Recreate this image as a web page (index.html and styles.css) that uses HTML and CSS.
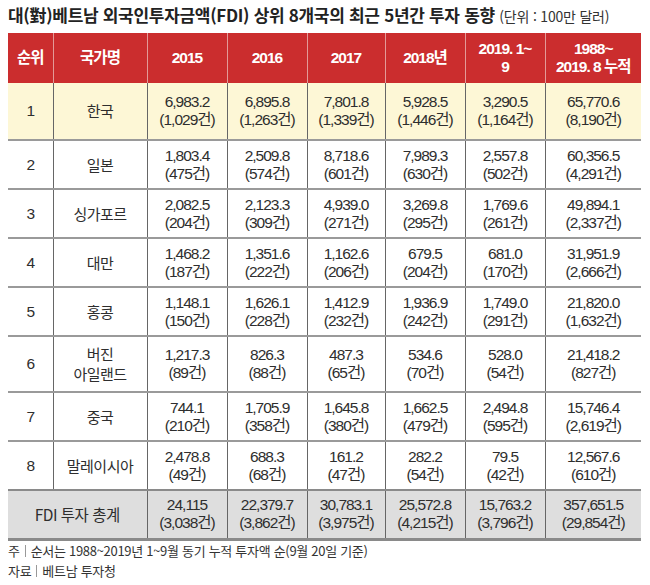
FILE: index.html
```html
<!DOCTYPE html>
<html lang="ko">
<head>
<meta charset="utf-8">
<link rel="stylesheet" href="styles.css">
</head>
<body>
<div class="page">
  <h1 class="title">대(對)베트남 외국인투자금액(FDI) 상위 8개국의 최근 5년간 투자 동향 <span class="unit">(단위 : 100만 달러)</span></h1>
  <table class="fdi">
    <colgroup>
      <col class="c-rank"><col class="c-name"><col class="c-y"><col class="c-y"><col class="c-y2"><col class="c-y"><col class="c-y"><col class="c-sum">
    </colgroup>
    <thead>
      <tr class="head">
        <th>순위</th><th>국가명</th><th>2015</th><th>2016</th><th>2017</th><th>2018년</th><th>2019. 1~<br>9</th><th>1988~<br>2019. 8 누적</th>
      </tr>
    </thead>
    <tbody>
      <tr class="r-hl">
        <td>1</td><td>한국</td><td>6,983.2<br>(1,029건)</td><td>6,895.8<br>(1,263건)</td><td>7,801.8<br>(1,339건)</td><td>5,928.5<br>(1,446건)</td><td>3,290.5<br>(1,164건)</td><td>65,770.6<br>(8,190건)</td>
      </tr>
      <tr class="r">
        <td>2</td><td>일본</td><td>1,803.4<br>(475건)</td><td>2,509.8<br>(574건)</td><td>8,718.6<br>(601건)</td><td>7,989.3<br>(630건)</td><td>2,557.8<br>(502건)</td><td>60,356.5<br>(4,291건)</td>
      </tr>
      <tr class="r">
        <td>3</td><td>싱가포르</td><td>2,082.5<br>(204건)</td><td>2,123.3<br>(309건)</td><td>4,939.0<br>(271건)</td><td>3,269.8<br>(295건)</td><td>1,769.6<br>(261건)</td><td>49,894.1<br>(2,337건)</td>
      </tr>
      <tr class="r">
        <td>4</td><td>대만</td><td>1,468.2<br>(187건)</td><td>1,351.6<br>(222건)</td><td>1,162.6<br>(206건)</td><td>679.5<br>(204건)</td><td>681.0<br>(170건)</td><td>31,951.9<br>(2,666건)</td>
      </tr>
      <tr class="r">
        <td>5</td><td>홍콩</td><td>1,148.1<br>(150건)</td><td>1,626.1<br>(228건)</td><td>1,412.9<br>(232건)</td><td>1,936.9<br>(242건)</td><td>1,749.0<br>(291건)</td><td>21,820.0<br>(1,632건)</td>
      </tr>
      <tr class="r-tall">
        <td>6</td><td>버진<br>아일랜드</td><td>1,217.3<br>(89건)</td><td>826.3<br>(88건)</td><td>487.3<br>(65건)</td><td>534.6<br>(70건)</td><td>528.0<br>(54건)</td><td>21,418.2<br>(827건)</td>
      </tr>
      <tr class="r">
        <td>7</td><td>중국</td><td>744.1<br>(210건)</td><td>1,705.9<br>(358건)</td><td>1,645.8<br>(380건)</td><td>1,662.5<br>(479건)</td><td>2,494.8<br>(595건)</td><td>15,746.4<br>(2,619건)</td>
      </tr>
      <tr class="r">
        <td>8</td><td>말레이시아</td><td>2,478.8<br>(49건)</td><td>688.3<br>(68건)</td><td>161.2<br>(47건)</td><td>282.2<br>(54건)</td><td>79.5<br>(42건)</td><td>12,567.6<br>(610건)</td>
      </tr>
      <tr class="total">
        <td colspan="2" class="total-label">FDI 투자 총계</td><td>24,115<br>(3,038건)</td><td>22,379.7<br>(3,862건)</td><td>30,783.1<br>(3,975건)</td><td>25,572.8<br>(4,215건)</td><td>15,763.2<br>(3,796건)</td><td>357,651.5<br>(29,854건)</td>
      </tr>
    </tbody>
  </table>
  <div class="notes">
    <p class="note"><span class="lbl">주</span><span class="sep"></span>순서는 1988~2019년 1~9월 동기 누적 투자액 순(9월 20일 기준)</p>
    <p class="note"><span class="lbl">자료</span><span class="sep"></span>베트남 투자청</p>
  </div>
</div>
</body>
</html>
```

FILE: styles.css
```css
html, body {
  margin: 0;
  padding: 0;
  background: #ffffff;
}

.page {
  width: 650px;
  height: 585px;
  padding: 0 8px 0 8px;
  box-sizing: border-box;
  font-family: "Liberation Sans", "Noto Sans CJK KR", sans-serif;
  color: #2e2e2e;
}

.title {
  margin: 0;
  height: 33px;
  padding-top: 5px;
  box-sizing: border-box;
  font-family: "Noto Sans CJK KR", sans-serif;
  font-size: 17px;
  font-weight: 700;
  line-height: 20px;
  letter-spacing: -0.3px;
  color: #222;
  white-space: nowrap;
}

.unit {
  font-size: 14px;
  font-weight: 400;
  letter-spacing: -0.2px;
  color: #333;
}

.fdi {
  width: 633px;
  border-collapse: collapse;
  table-layout: fixed;
  font-size: 15.5px;
  letter-spacing: -1px;
}

.c-rank { width: 45px; }
.c-name { width: 94px; }
.c-y { width: 80px; }
.c-y2 { width: 78px; }
.c-sum { width: 96px; }

.fdi th,
.fdi td {
  padding: 0;
  text-align: center;
  vertical-align: middle;
  line-height: 18px;
}

.head {
  height: 50px;
  background: #cb2d2e;
}

.head th {
  color: #ffffff;
  font-weight: 700;
  font-size: 15.5px;
  border-left: 1px solid #e39a98;
}

.head th:first-child {
  border-left: none;
}

.fdi td {
  border-left: 1px solid #666666;
  border-top: 2px solid #9a9a9a;
}

.fdi td:first-child {
  border-left: none;
}

.r-hl td {
  border-top: none;
}

.r-hl {
  height: 57px;
  background: #fdf7d6;
}

.r {
  height: 49px;
}

.r-tall {
  height: 56px;
}

.r td:nth-child(2),
.r-hl td:nth-child(2),
.r-tall td:nth-child(2) {
  font-family: "Noto Sans CJK KR", sans-serif;
  font-size: 15px;
  letter-spacing: -0.5px;
  line-height: 20px;
}

.total {
  height: 49px;
  background: #dedede;
}

.total td {
  border-top: 2px solid #8a8a8a;
  border-bottom: 3px solid #8a8a8a;
  border-left: 1px solid #666666;
}

.total td.total-label {
  border-left: none;
  font-family: "Noto Sans CJK KR", sans-serif;
  font-size: 15.5px;
  letter-spacing: -0.5px;
}

.notes {
  padding-top: 0;
}

.note {
  margin: 0;
  font-family: "Noto Sans CJK KR", sans-serif;
  font-size: 13px;
  line-height: 20px;
  letter-spacing: -0.3px;
  color: #333;
  display: flex;
  align-items: center;
}

.sep {
  display: inline-block;
  width: 1px;
  height: 12px;
  background: #999;
  margin: 0 5px 0 5px;
}
```
